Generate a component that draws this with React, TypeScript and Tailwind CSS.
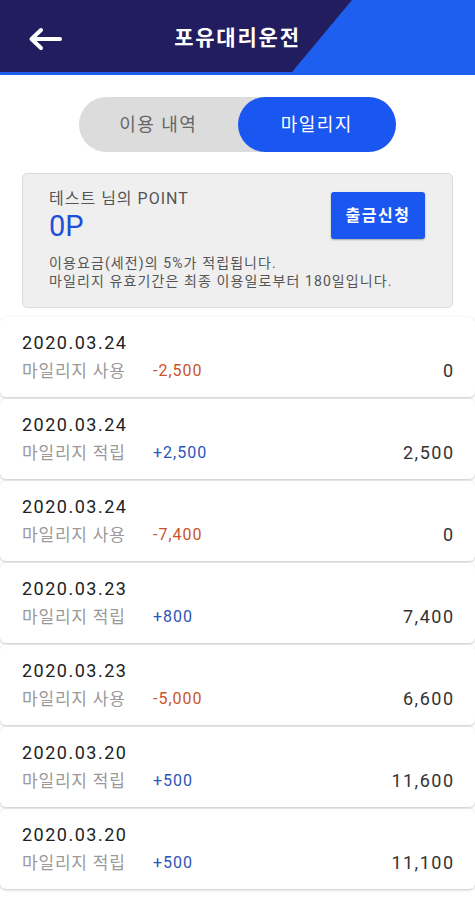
import { useState } from "react";

const rows = [
  { date: "2020.03.24", type: "마일리지 사용", amount: "-2,500", balance: "0" },
  { date: "2020.03.24", type: "마일리지 적립", amount: "+2,500", balance: "2,500" },
  { date: "2020.03.24", type: "마일리지 사용", amount: "-7,400", balance: "0" },
  { date: "2020.03.23", type: "마일리지 적립", amount: "+800", balance: "7,400" },
  { date: "2020.03.23", type: "마일리지 사용", amount: "-5,000", balance: "6,600" },
  { date: "2020.03.20", type: "마일리지 적립", amount: "+500", balance: "11,600" },
  { date: "2020.03.20", type: "마일리지 적립", amount: "+500", balance: "11,100" },
];

function Header() {
  return (
    <div className="relative h-[75px] bg-[#221d5e] border-b-[3px] border-[#1f5ff0] overflow-hidden">
      <svg className="absolute inset-0" width="475" height="72" viewBox="0 0 475 72">
        <polygon points="352,0 475,0 475,72 292,72" fill="#1f5ff0" />
      </svg>
      <div className="relative flex items-center h-full px-[28px] pt-[5px]">
        <svg width="34" height="24" viewBox="0 0 34 24" fill="none">
          <path d="M32 12H4M13 3L3.5 12L13 21" stroke="#fff" strokeWidth="4" strokeLinecap="round" strokeLinejoin="round" />
        </svg>
        <h1 className="absolute left-0 right-0 text-center text-white text-[21px] tracking-[1.8px] font-bold pointer-events-none">포유대리운전</h1>
      </div>
    </div>
  );
}

export default function App() {
  const [tab, setTab] = useState(1);
  return (
    <div className="w-[475px] min-h-[900px] bg-white font-['Roboto','Noto_Sans_CJK_KR',sans-serif]">
      <Header />
      <div className="flex justify-center pt-[22px]">
        <div className="flex w-[317px] h-[55px] rounded-full bg-[#dcdcdc]">
          <button
            onClick={() => setTab(0)}
            className={`flex-1 rounded-full text-[18px] tracking-[1.5px] ${tab === 0 ? "bg-[#1a56f0] text-white" : "text-[#666]"}`}
          >
            이용 내역
          </button>
          <button
            onClick={() => setTab(1)}
            className={`flex-1 rounded-full text-[18px] tracking-[1.5px] ${tab === 1 ? "bg-[#1a56f0] text-white" : "text-[#666]"}`}
          >
            마일리지
          </button>
        </div>
      </div>
      <div className="mx-[22px] mt-[21px] h-[135px] rounded-[5px] border border-[#dcdcdc] bg-[#efefef] pl-[26px] pr-[27px] pt-[14px]">
        <div className="flex justify-between">
          <div>
            <p className="text-[16px] leading-[22px] tracking-[1px] text-[#555]">테스트 님의 POINT</p>
            <p className="text-[29px] leading-[32px] text-[#1d4fd8]">0P</p>
          </div>
          <button className="mt-[4px] w-[94px] h-[47px] rounded-[3px] bg-[#1a56f0] text-white text-[16px] tracking-[1.5px] font-bold shadow-[0_1px_2px_rgba(0,0,0,0.3)]">
            출금신청
          </button>
        </div>
        <div className="mt-[12px] text-[14px] leading-[18px] tracking-[1.1px] text-[#555]">
          <p>이용요금(세전)의 5%가 적립됩니다.</p>
          <p>마일리지 유효기간은 최종 이용일로부터 180일입니다.</p>
        </div>
      </div>
      <div className="mt-[9px] flex flex-col gap-[2px]">
        {rows.map((r, i) => (
          <div key={i} className="h-[80px] rounded-[6px] bg-white shadow-[0_1px_3px_rgba(0,0,0,0.22)] px-[22px] pt-[13px]">
            <p className="text-[18px] leading-[26px] tracking-[1.5px] text-[#222]">{r.date}</p>
            <div className="flex items-center mt-[3px] leading-[24px]">
              <span className="w-[131px] text-[17px] tracking-[0.8px] text-[#9a9a9a]">{r.type}</span>
              <span className={`text-[16px] tracking-[1px] ${r.amount.startsWith("-") ? "text-[#c9542c]" : "text-[#2c55b8]"}`}>{r.amount}</span>
              <span className="ml-auto mr-[-1.5px] text-[18px] tracking-[1.5px] text-[#333]">{r.balance}</span>
            </div>
          </div>
        ))}
      </div>
    </div>
  );
}
